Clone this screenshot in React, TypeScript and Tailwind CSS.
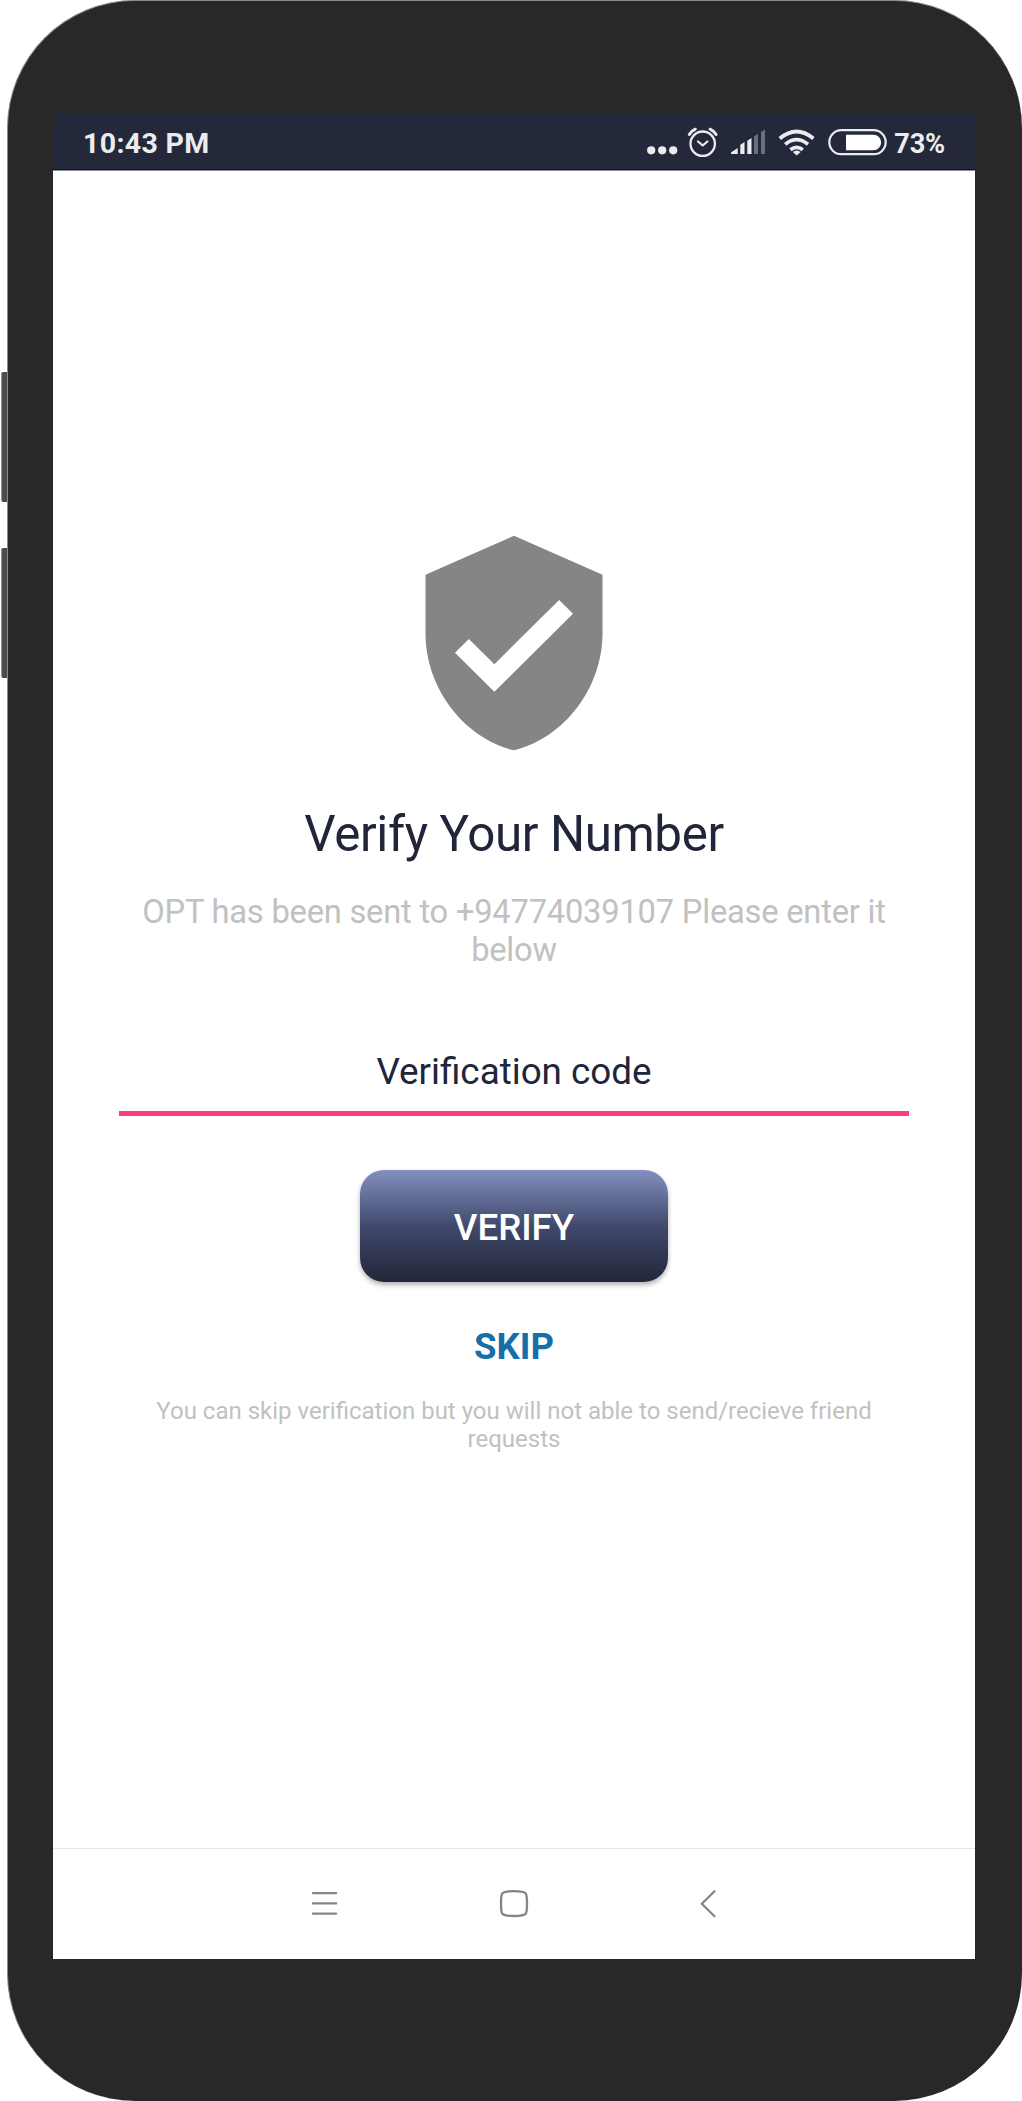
function StatusBar() {
  return (
    <header className="flex h-[57px] shrink-0 items-center justify-between border-b border-[#8d90a0] bg-[#24283b] pr-[30px] pl-[30px] text-[#ececee] shadow-[inset_0_-1px_0_#0f1226]">
      <span className="pt-[3px] text-[28.500px] leading-[32px] font-bold tracking-[0.35px]">10:43 PM</span>
      <div className="flex items-center">
        <svg className="h-[56px] w-[250px]" viewBox="640 114 250 56" fill="none" stroke="#ececee">
          <g fill="#ececee" stroke="none">
            <circle cx="650.2" cy="150.3" r="4.1" />
            <circle cx="661.2" cy="150.3" r="4.1" />
            <circle cx="672.2" cy="150.3" r="4.1" />
          </g>
          <circle cx="701.7" cy="143.7" r="12.2" strokeWidth="2.3" />
          <path d="M697 141.5l4.7 4 4.7-4" strokeWidth="2.2" strokeLinecap="round" strokeLinejoin="round" />
          <path d="M688.3 134.5q2-3.500 6-5.300M715.100 134.500q-2-3.500-6-5.300" strokeWidth="3" strokeLinecap="round" />
          <g fill="#ececee" stroke="none">
            <path d="M730 154v-1.500l6.700-4.500v6z" />
            <path d="M739.300 154v-9.300l4.200-2.800V154z" />
            <path d="M746.300 154v-13.300l4.200-2.800V154z" />
          </g>
          <g fill="#6b6e7d" stroke="none">
            <path d="M753 154v-17.500l4-2.700V154z" />
            <path d="M760 154v-21.800l4-2.700V154z" />
          </g>
          <g strokeWidth="3.700">
            <path d="M778.800 138.500q16.700-14 33.600 0" />
            <path d="M784.200 144.300q11.300-9.400 22.800 0" />
            <path d="M789.400 149.800q6.200-4.900 12.400 0" />
          </g>
          <path d="M791.800 152q3.800-3.200 7.800 0l-3.900 3.600z" fill="#ececee" stroke="none" />
          <rect x="828.300" y="130.200" width="56.400" height="24" rx="12" strokeWidth="2.200" />
          <path d="M845 134.800h27.500a7.700 7.700 0 0 1 0 15.400H845z" fill="#fff" stroke="none" />
        </svg>
        <span className="ml-[3px] pt-[3px] text-[27.200px] leading-[32px] font-bold tracking-[-0.200px]">73%</span>
      </div>
    </header>
  );
}

function NavBar() {
  return (
    <nav className="flex h-[111px] shrink-0 items-center border-t border-[#e6e6e6] pl-[256px] text-[#858585]">
      <svg className="h-[30px] w-[30px]" viewBox="0 0 30 30" fill="none" stroke="currentColor" strokeWidth="2.200" strokeLinecap="round">
        <path d="M3.900 4.100h23.300M3.900 14.400h23.300M3.900 24.700h23.300" />
      </svg>
      <svg className="ml-[160px] h-[30px] w-[30px]" viewBox="0 0 30 30" fill="none" stroke="currentColor" strokeWidth="2.300">
        <path d="M15 2.200c8.500 0 10.500.8 11.700 2.200 1 1.500 1.300 4 1.300 10.200s-.3 8.700-1.300 10.200C25.500 26.200 23.500 27 15 27S4.500 26.200 3.300 24.800C2.300 23.300 2 20.800 2 14.600s.3-8.700 1.300-10.200C4.500 3 6.500 2.200 15 2.200z" />
      </svg>
      <svg className="ml-[164px] h-[30px] w-[30px]" viewBox="0 0 30 30" fill="none" stroke="currentColor" strokeWidth="2.300" strokeLinecap="round" strokeLinejoin="round">
        <path d="M21.500 2.200L8.800 14.700l12.700 12.500" />
      </svg>
    </nav>
  );
}

export default function App() {
  return (
    <div className="flex h-[2101px] w-[1022px] overflow-hidden bg-white font-['Roboto',sans-serif]">
      <div className="flex w-[7px] shrink-0 flex-col pt-[372px] pl-px">
        <div className="h-[130px] rounded-l-[2px] border-l border-[#999] bg-[#4b4b4b]" />
        <div className="mt-[46px] h-[130px] rounded-l-[2px] border-l border-[#999] bg-[#4b4b4b]" />
      </div>
      <div className="flex h-[2101px] w-[1015px] shrink-0 rounded-[128px] border-t border-l border-[#8a8a8a] bg-[#282828] pt-[113px] pl-[45px]">
        <div className="flex h-[1845px] w-[922px] flex-col overflow-hidden bg-white">
          <StatusBar />
          <main className="flex flex-1 flex-col items-center text-center">
            <svg className="mt-[355px] h-[234px] w-[236px] blur-[0.7px]" viewBox="0 0 24 24" preserveAspectRatio="none" fill="#858585">
              <path d="M12 1L3 5v6c0 5.550 3.840 10.740 9 12 5.160-1.260 9-6.450 9-12V5l-9-4zm-2 16l-4-4 1.410-1.410L10 14.170l6.590-6.590L18 9l-8 8z" />
            </svg>
            <h1 className="mt-[44px] text-[49.300px] leading-[60px] tracking-[-0.370px] whitespace-nowrap text-[#21253a]">Verify Your Number</h1>
            <p className="mt-[30px] w-[780px] text-[32.700px] leading-[37.500px] tracking-[-0.220px] text-[#c1c1c1]">
              OPT has been sent to +94774039107 Please enter it below
            </p>
            <div className="mt-[79px] flex h-[68px] w-[790px] justify-center border-b-[5px] border-[#ff3b7f] text-[36.800px] leading-[48px] text-[#21253a]">
              Verification code
            </div>
            <button className="mt-[54px] h-[112px] w-[308px] rounded-[24px] bg-linear-to-b from-[#8490c0] via-[#414a6d] to-[#23263a] pt-[3px] text-[36.700px] leading-[48px] font-medium text-white shadow-[0_3px_5px_rgba(0,0,0,0.3)]">
              VERIFY
            </button>
            <button className="mt-[41px] text-[36.500px] leading-[48px] font-bold text-[#176fa9]">SKIP</button>
            <p className="mt-[26px] w-[740px] text-[24px] leading-[28px] text-[#c1c1c1]">
              You can skip verification but you will not able to send/recieve friend requests
            </p>
          </main>
          <NavBar />
        </div>
      </div>
    </div>
  );
}
